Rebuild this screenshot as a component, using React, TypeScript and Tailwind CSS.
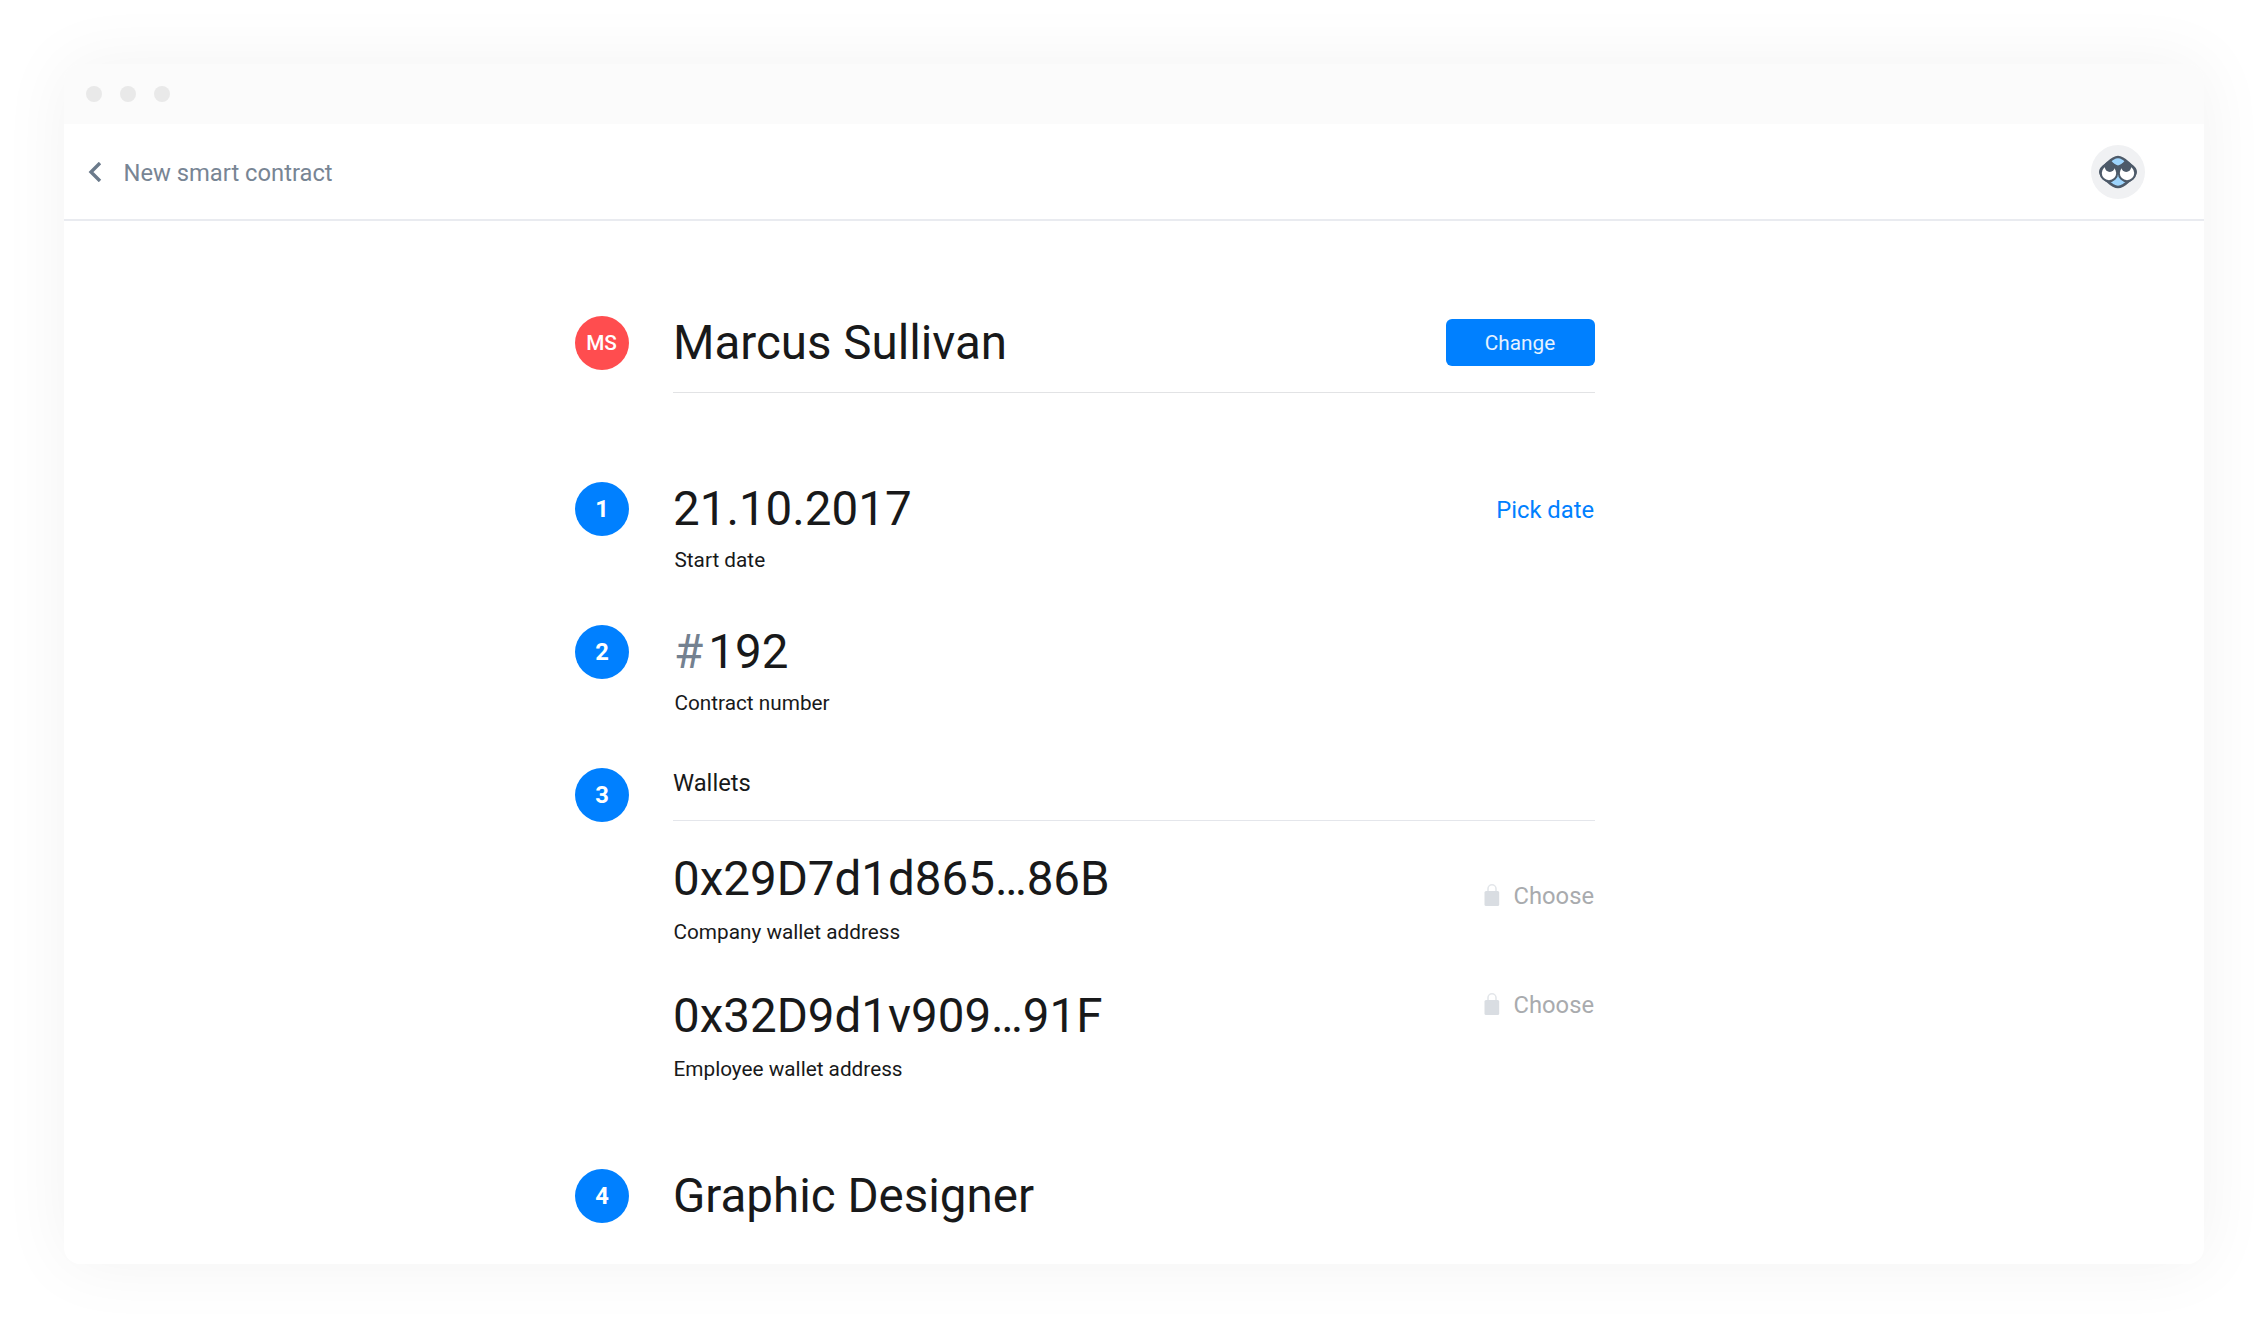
import type { ReactNode } from "react";

function Badge({ children, className }: { children: ReactNode; className: string }) {
  return (
    <div className={`flex size-[54px] shrink-0 items-center justify-center rounded-full text-white ${className}`}>
      {children}
    </div>
  );
}

function Lock() {
  return (
    <svg className="mb-[3px]" width="16" height="22" viewBox="0 0 16 22" fill="none">
      <path d="M4 8V4.800a4 4 0 0 1 8 0V8" stroke="#e3e6ea" strokeWidth="1.600" />
      <rect x="0.500" y="7" width="14.700" height="15" rx="1.600" fill="#d9dde2" />
    </svg>
  );
}

function Choose() {
  return (
    <button className="flex items-center gap-3.5 text-[23.75px] leading-7 text-[#a9abae]">
      <Lock />
      <span>Choose</span>
    </button>
  );
}

function Avatar() {
  return (
    <svg className="size-[54px]" viewBox="0 0 54 54" fill="none">
      <circle cx="27" cy="27" r="27" fill="#f0f1f3" />
      <path
        d="M9.300 27c0-3.200 2.200-5.200 5.200-7.200 3.700-3.400 7.300-7.800 12.500-7.800s8.800 4.400 12.500 7.800c3 2 5.200 4 5.200 7.200s-2.200 5.200-5.200 7.400c-3.700 3.300-7.300 7.600-12.500 7.600s-8.800-4.300-12.500-7.600c-3-2.200-5.200-4.200-5.200-7.400Z"
        fill="#9ed5fd"
        stroke="#4d5a69"
        strokeWidth="2.600"
      />
      <path d="M13 20c2-2.500 5-4 7.500-4 1.500 2.500 4 3.500 6.500 4.500 2.500-1 5-2 6.500-4.500 2.500 0 5.500 1.500 7.500 4l1 5-5 4H17l-5-4 1-5Z" fill="#4d5a69" />
      <circle cx="18" cy="28" r="8.200" fill="#fff" stroke="#4d5a69" strokeWidth="2" />
      <circle cx="36" cy="28" r="8.200" fill="#fff" stroke="#4d5a69" strokeWidth="2" />
      <circle cx="18.800" cy="22" r="4.900" fill="#4d5a69" />
      <circle cx="35.200" cy="22" r="4.900" fill="#4d5a69" />
    </svg>
  );
}

const step = "bg-[#0080ff] text-[23.75px] leading-7 font-bold";
const value = "text-[47.5px] leading-[54px]";
const caption = "text-[20.75px] leading-6";

export default function App() {
  return (
    <div className="h-[1328px] w-[2268px] overflow-hidden bg-white p-16 font-[Roboto,sans-serif] text-[#18191a]">
      <div className="flex h-[1200px] flex-col overflow-hidden rounded-2xl bg-white shadow-[0_0_70px_rgba(0,0,0,0.055)]">
        <div className="flex h-[60px] shrink-0 items-center gap-[18px] bg-[#fbfbfb] px-[22px]">
          <i className="size-4 rounded-full bg-[#e9e9e9]" />
          <i className="size-4 rounded-full bg-[#e9e9e9]" />
          <i className="size-4 rounded-full bg-[#e9e9e9]" />
        </div>
        <header className="flex h-[97px] shrink-0 items-center justify-between border-b-2 border-[#e9ebf0] pr-[59px] pl-6">
          <div className="flex items-center gap-[21.5px] text-[23.75px] leading-7 text-[#788594]">
            <svg width="14" height="20" viewBox="0 0 14 20" fill="none">
              <path d="M12 1 3 10l9 9" stroke="#6b7a8b" strokeWidth="3.400" />
            </svg>
            <span className="mt-0.5">New smart contract</span>
          </div>
          <Avatar />
        </header>
        <main className="ml-[511px] flex w-[1020px] flex-col pt-[95px]">
          <section className="flex gap-11">
            <Badge className="bg-[#ff4d4f] pr-px text-[20.75px] leading-6 font-medium">MS</Badge>
            <div className="flex h-[77px] flex-1 items-start justify-between border-b border-[#e2e3e5]">
              <h1 className={value}>Marcus Sullivan</h1>
              <button className="mt-[3px] h-[47px] w-[149px] rounded-md bg-[#0080ff] pt-px pr-px text-[20.75px] leading-6 text-white/90">
                Change
              </button>
            </div>
          </section>
          <section className="mt-[89px] flex gap-11">
            <Badge className={step}>1</Badge>
            <div className="flex-1">
              <div className="flex items-center justify-between">
                <h2 className={value}>21.10.2017</h2>
                <a className="mt-0.5 mr-px text-[23.75px] leading-7 text-[#0080ff]">Pick date</a>
              </div>
              <p className={`mt-3 ml-[1.5px] ${caption}`}>Start date</p>
            </div>
          </section>
          <section className="mt-[53px] flex gap-11">
            <Badge className={step}>2</Badge>
            <div className="flex-1">
              <h2 className={`ml-px flex gap-[5px] ${value}`}>
                <span className="text-[#748190]">#</span>
                <span>192</span>
              </h2>
              <p className={`mt-3 ml-[1.5px] ${caption}`}>Contract number</p>
            </div>
          </section>
          <section className="mt-[53px] flex gap-11">
            <Badge className={step}>3</Badge>
            <div className="flex-1">
              <h3 className="h-[53px] border-b border-[#e4e6eb] text-[23.75px] leading-[30px]">Wallets</h3>
              <div className="mt-[31px] flex items-start justify-between">
                <div>
                  <h2 className={value}>0x29D7d1d865…86B</h2>
                  <p className={`mt-3.5 ml-[0.5px] ${caption}`}>Company wallet address</p>
                </div>
                <div className="mt-[30px] mr-px">
                  <Choose />
                </div>
              </div>
              <div className="mt-[45px] flex items-start justify-between">
                <div>
                  <h2 className={value}>0x32D9d1v909…91F</h2>
                  <p className={`mt-3.5 ml-[0.5px] ${caption}`}>Employee wallet address</p>
                </div>
                <div className="mt-0.5 mr-px">
                  <Choose />
                </div>
              </div>
            </div>
          </section>
          <section className="mt-[88px] flex gap-11">
            <Badge className={step}>4</Badge>
            <h2 className={value}>Graphic Designer</h2>
          </section>
        </main>
      </div>
    </div>
  );
}
